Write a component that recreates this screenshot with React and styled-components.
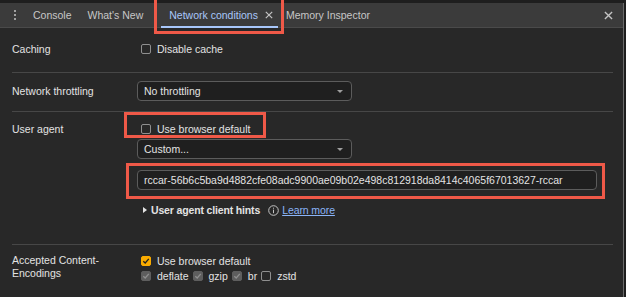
import styled, { createGlobalStyle } from 'styled-components'

const GlobalStyle = createGlobalStyle`
  html, body {
    margin: 0;
    padding: 0;
    background: #282828;
  }
  body {
    font-family: "Liberation Sans", Arial, sans-serif;
    font-size: 10.5px;
    color: #e3e3e3;
  }
`

const Window = styled.div`
  width: 626px;
  height: 297px;
  display: flex;
  flex-direction: column;
  overflow: hidden;
  background: #282828;
`

const TopStrip = styled.div`
  height: 3px;
  background: #1e1e1e;
  flex-shrink: 0;
`

const Body = styled.div`
  flex: 1;
  display: flex;
`

const Panel = styled.div`
  flex: 1;
  display: flex;
  flex-direction: column;
`

const RightEdge = styled.div`
  width: 2px;
  border-left: 1px solid #6a6a6a;
  background: #1e1e1e;
`

const TabBar = styled.div`
  height: 24px;
  display: flex;
  align-items: stretch;
  background: #3b3b3b;
  border-bottom: 1px solid #4a4a4a;
  padding-left: 10px;
  padding-right: 8px;
`

const Kebab = styled.div`
  width: 10px;
  display: flex;
  flex-direction: column;
  align-items: center;
  justify-content: center;
  gap: 2px;
  margin-right: 5px;

  span {
    width: 2px;
    height: 2px;
    border-radius: 50%;
    background: #c4c4c4;
  }
`

const Tab = styled.div`
  position: relative;
  display: flex;
  align-items: center;
  gap: 7px;
  padding: 0 ${(p) => (p.active ? '5px' : '8px')} 0 8px;
  margin-right: ${(p) => p.gap || 0}px;
  color: ${(p) => (p.active ? '#a8c7fa' : '#c7c7c7')};
  white-space: nowrap;
  border-bottom: 2px solid ${(p) => (p.active ? '#a8c7fa' : 'transparent')};
  margin-bottom: -1px;
`

const Spacer = styled.div`
  flex: 1;
`

const CloseAll = styled.div`
  display: flex;
  align-items: center;
  padding-right: 2px;
`

const Highlight = styled.span`
  position: absolute;
  top: ${(p) => p.t}px;
  left: ${(p) => p.l}px;
  right: ${(p) => p.r}px;
  bottom: ${(p) => p.b}px;
  border: 3px solid #ef5948;
  pointer-events: none;
  z-index: 2;
`

const Content = styled.div`
  flex: 1;
  padding: 0 10px 0 12px;
`

const Section = styled.div`
  display: grid;
  grid-template-columns: 125px 1fr;
  padding: ${(p) => p.pad};
  border-bottom: ${(p) => (p.last ? 'none' : '1px solid #474747')};
`

const Label = styled.div`
  line-height: 13px;
  padding-top: ${(p) => p.top || 0}px;
`

const Controls = styled.div`
  display: flex;
  flex-direction: column;
  align-items: flex-start;
`

const CheckRow = styled.label`
  position: relative;
  display: flex;
  align-items: center;
  height: 16px;
  margin-left: 4px;
  gap: 6px;
`

const Box = styled.span`
  width: 10px;
  height: 10px;
  box-sizing: border-box;
  border-radius: 2px;
  display: inline-flex;
  align-items: center;
  justify-content: center;
  flex-shrink: 0;
  border: 1px solid
    ${(p) => (p.state === 'on' ? '#f9ab00' : p.state === 'off' ? '#8f8f8f' : '#5e5e5e')};
  background: ${(p) =>
    p.state === 'on' ? '#f9ab00' : p.state === 'dis' ? '#5e5e5e' : 'transparent'};
`

const InlineChecks = styled.div`
  display: flex;
  align-items: center;
  height: 14px;
  margin-left: 4px;
  gap: 4px;
`

const Item = styled.span`
  display: flex;
  align-items: center;
  gap: 6px;
`

const SelectBox = styled.div`
  position: relative;
  box-sizing: border-box;
  width: ${(p) => p.w}px;
  height: 20px;
  border: 1px solid #5c5c5c;
  border-radius: 4px;
  background: #1f1f1f;
  display: flex;
  align-items: center;
  justify-content: space-between;
  padding: 0 8px 0 6px;
  margin-top: ${(p) => p.mt || 0}px;
  color: #e3e3e3;
  white-space: nowrap;
`

const Arrow = styled.span`
  width: 0;
  height: 0;
  border-left: 3px solid transparent;
  border-right: 3px solid transparent;
  border-top: 3px solid #9e9e9e;
`

const Hints = styled.div`
  display: flex;
  align-items: center;
  height: 16px;
  margin-top: 12px;
  margin-left: 6px;
  gap: 3px;
`

const Caret = styled.span`
  width: 0;
  height: 0;
  border-top: 3px solid transparent;
  border-bottom: 3px solid transparent;
  border-left: 4px solid #e3e3e3;
  margin-right: 1px;
`

const Bold = styled.span`
  font-weight: bold;
  letter-spacing: -0.15px;
  margin-right: 5px;
`

const Link = styled.a`
  color: #8ab4f8;
  text-decoration: underline;
  letter-spacing: -0.1px;
`

function Check({ state }) {
  return (
    <Box state={state}>
      {state !== 'off' && (
        <svg width="8" height="8" viewBox="0 0 8 8">
          <path
            d="M1.3 4.2 L3.2 6 L6.8 1.8"
            fill="none"
            stroke={state === 'on' ? '#1f1f1f' : '#8f8f8f'}
            strokeWidth="1.3"
          />
        </svg>
      )}
    </Box>
  )
}

function XIcon({ size = 8, color = '#c4c4c4' }) {
  return (
    <svg width={size} height={size} viewBox="0 0 8 8">
      <path d="M0.8 0.8 L7.2 7.2 M7.2 0.8 L0.8 7.2" stroke={color} strokeWidth="1.2" />
    </svg>
  )
}

function InfoIcon() {
  return (
    <svg width="11" height="11" viewBox="0 0 11 11">
      <circle cx="5.5" cy="5.5" r="4.8" fill="none" stroke="#c4c4c4" strokeWidth="1" />
      <rect x="5" y="4.6" width="1" height="3.6" fill="#c4c4c4" />
      <rect x="5" y="2.7" width="1" height="1" fill="#c4c4c4" />
    </svg>
  )
}

export default function App() {
  return (
    <Window>
      <GlobalStyle />
      <TopStrip />
      <Body>
        <Panel>
          <TabBar>
            <Kebab>
              <span />
              <span />
              <span />
            </Kebab>
            <Tab>Console</Tab>
            <Tab gap={10}>What&apos;s New</Tab>
            <Tab active>
              Network conditions
              <XIcon size={8} color="#c4c4c4" />
              <Highlight t={-6} l={-7} r={-6} b={-8} />
            </Tab>
            <Tab>Memory Inspector</Tab>
            <Spacer />
            <CloseAll>
              <XIcon size={9} />
            </CloseAll>
          </TabBar>
          <Content>
            <Section pad="13px 0 15px">
              <Label top={2}>Caching</Label>
              <Controls>
                <CheckRow>
                  <Check state="off" />
                  Disable cache
                </CheckRow>
              </Controls>
            </Section>
            <Section pad="8px 0 10px">
              <Label top={4}>Network throttling</Label>
              <Controls>
                <SelectBox w={215}>
                  No throttling
                  <Arrow />
                </SelectBox>
              </Controls>
            </Section>
            <Section pad="9px 0 26px">
              <Label top={2}>User agent</Label>
              <Controls>
                <CheckRow>
                  <Check state="off" />
                  Use browser default
                  <Highlight t={-9} l={-17} r={-16} b={-1} />
                </CheckRow>
                <SelectBox w={215} mt={2}>
                  Custom...
                  <Arrow />
                </SelectBox>
                <SelectBox w={460} mt={11}>
                  rccar-56b6c5ba9d4882cfe08adc9900ae09b02e498c812918da8414c4065f67013627-rccar
                  <Highlight t={-8} l={-12} r={-9} b={-10} />
                </SelectBox>
                <Hints>
                  <Caret />
                  <Bold>User agent client hints</Bold>
                  <InfoIcon />
                  <Link>Learn more</Link>
                </Hints>
              </Controls>
            </Section>
            <Section pad="8px 0 0" last>
              <Label top={1}>
                Accepted Content-
                <br />
                Encodings
              </Label>
              <Controls>
                <CheckRow>
                  <Check state="on" />
                  Use browser default
                </CheckRow>
                <InlineChecks>
                  <Item>
                    <Check state="dis" />
                    deflate
                  </Item>
                  <Item>
                    <Check state="dis" />
                    gzip
                  </Item>
                  <Item>
                    <Check state="dis" />
                    br
                  </Item>
                  <Item>
                    <Check state="off" />
                    zstd
                  </Item>
                </InlineChecks>
              </Controls>
            </Section>
          </Content>
        </Panel>
        <RightEdge />
      </Body>
    </Window>
  )
}
